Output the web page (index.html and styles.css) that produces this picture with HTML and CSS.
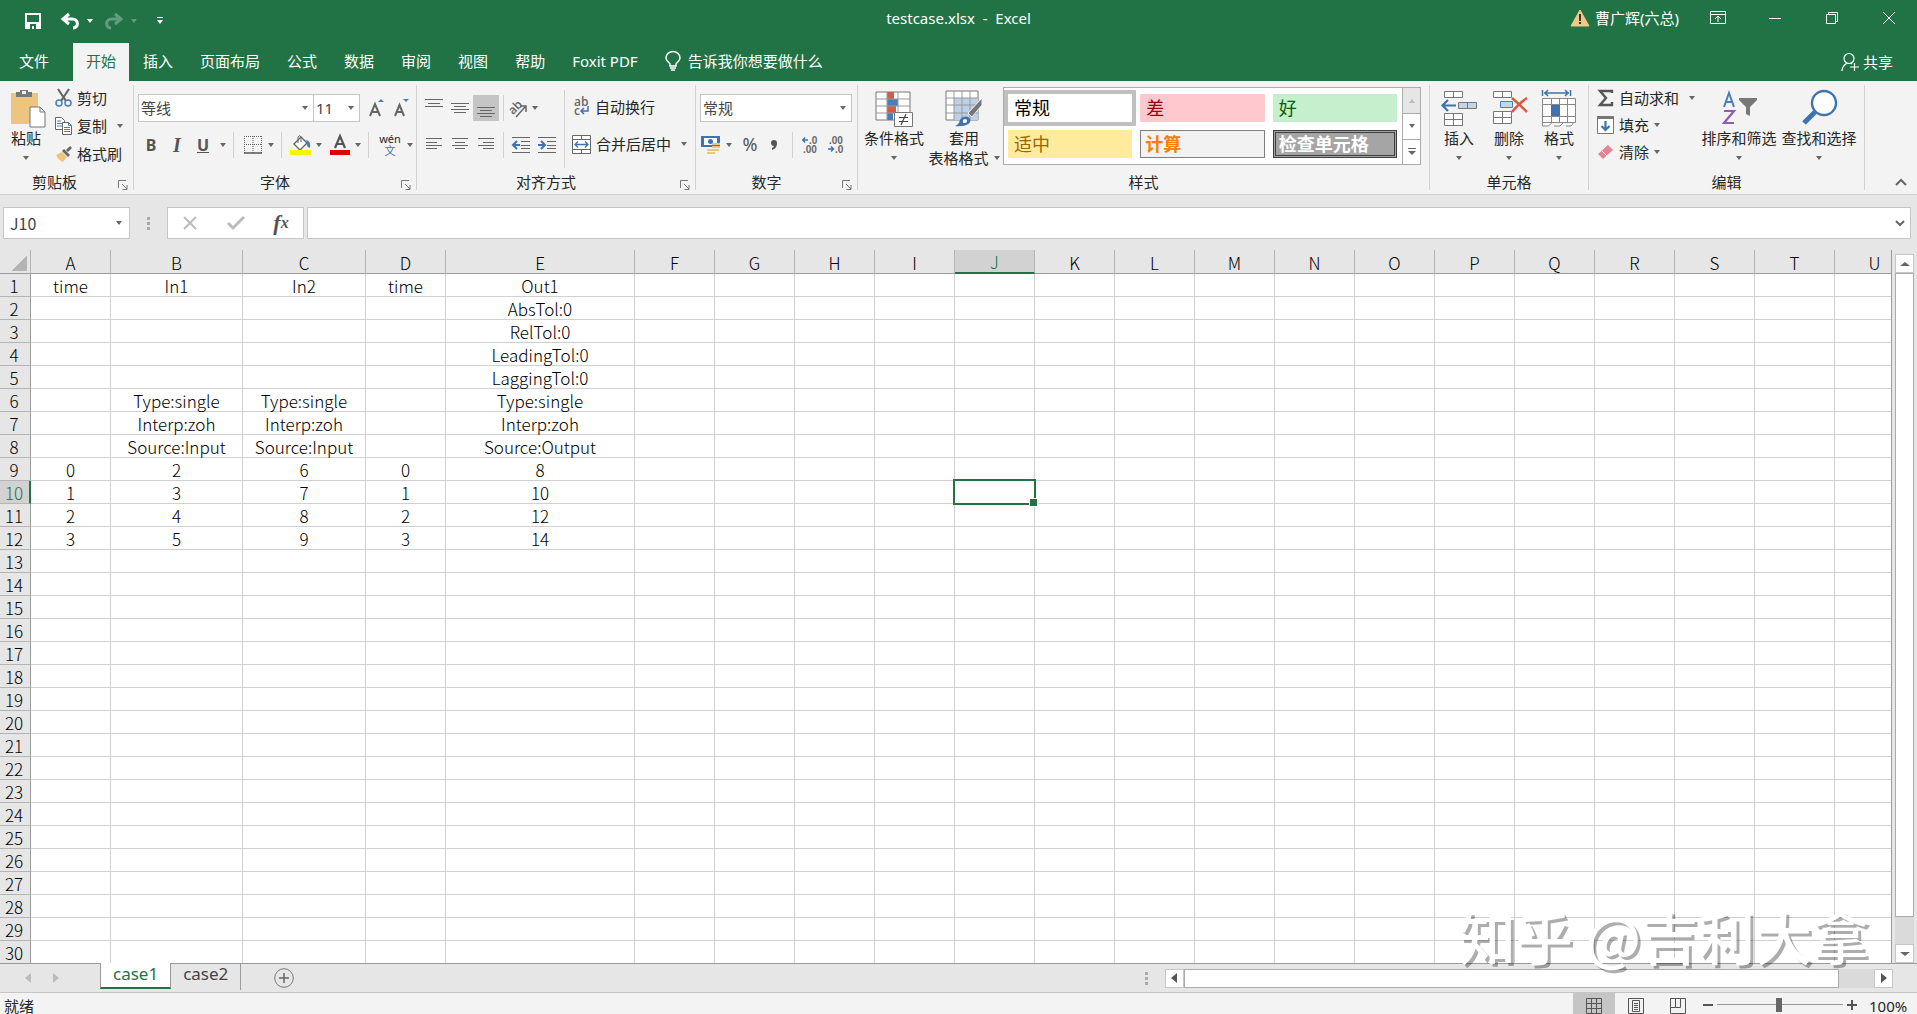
FILE: index.html
```html
<!DOCTYPE html>
<html lang="zh-CN">
  <head>
    <meta charset="UTF-8" />
    <meta name="viewport" content="width=device-width, initial-scale=1.0" />
    <title>testcase.xlsx - Excel</title>
    <link rel="stylesheet" href="styles.css">
  </head>
  <body>
    <!-- title bar -->
    <header class="title-bar">
      <div class="quick-access">
        <button class="qa-save" aria-label="保存">
          <svg width="16" height="16" viewBox="0 0 16 16"><path d="M1 1h14v14H1z" fill="none" stroke="#fff" stroke-width="2" /><path d="M2 9h12v6H2z" fill="#fff" /><path d="M5 11h6v5H9v-3H7v3H5z" fill="#217346" /></svg>
        </button>
        <button class="qa-undo" aria-label="撤消">
          <svg width="18" height="16" viewBox="0 0 18 16"><path d="M8 1L2 6l6 5M3 6h8c7 0 7 9 1 9" fill="none" stroke="#fff" stroke-width="3" /></svg>
          <i class="caret"></i>
        </button>
        <button class="qa-redo" aria-label="恢复">
          <svg width="18" height="16" viewBox="0 0 18 16"><path d="M10 1l6 5-6 5M15 6H7c-7 0-7 9-1 9" fill="none" stroke="#fff" stroke-width="3" /></svg>
          <i class="caret"></i>
        </button>
        <button class="qa-more" aria-label="自定义快速访问工具栏">
          <svg width="6" height="8" viewBox="0 0 6 8"><path d="M0 0h6v1H0zM0 3h6L3 7z" fill="#fff" /></svg>
        </button>
      </div>
      <h1 class="doc-title">testcase.xlsx&nbsp; -&nbsp; Excel</h1>
      <div class="window-tools">
        <button class="account">
          <svg width="20" height="18" viewBox="0 0 20 18"><path d="M10 1l9 16H1z" fill="#f0c987" stroke="#f0c987" stroke-linejoin="round" /><path d="M9 5h2v7H9zM9 13h2v2H9z" fill="#333" /></svg>
          曹广辉(六总)
        </button>
        <button class="win-btn" aria-label="功能区显示选项">
          <svg width="16" height="14" viewBox="0 0 16 14"><path d="M.5.5h15v12H.5zM.5 3.5h15M8 11V5M5 8l3-3 3 3" fill="none" stroke="#fff" /></svg>
        </button>
        <button class="win-btn" aria-label="最小化">
          <svg width="12" height="12" viewBox="0 0 12 12"><path d="M0 6.5h12" stroke="#fff" /></svg>
        </button>
        <button class="win-btn" aria-label="向下还原">
          <svg width="12" height="12" viewBox="0 0 12 12"><path d="M.5 2.5h9v9h-9zM2.5 2V.5h9v9H10" fill="none" stroke="#fff" /></svg>
        </button>
        <button class="win-btn" aria-label="关闭">
          <svg width="12" height="12" viewBox="0 0 12 12"><path d="M0 0l12 12M12 0L0 12" stroke="#fff" /></svg>
        </button>
      </div>
    </header>

    <!-- ribbon tabs -->
    <nav class="tabs">
      <button class="tab tab-file">文件</button>
      <button class="tab active">开始</button>
      <button class="tab">插入</button>
      <button class="tab">页面布局</button>
      <button class="tab">公式</button>
      <button class="tab">数据</button>
      <button class="tab">审阅</button>
      <button class="tab">视图</button>
      <button class="tab">帮助</button>
      <button class="tab">Foxit PDF</button>
      <button class="tab tell-me">
        <svg width="16" height="20" viewBox="0 0 16 20"><path d="M5 15v-2C4 11 1 10 1 7a7 6.5 0 0 1 14 0c0 3-3 4-4 6v2zM5 17h6M6 19h4" fill="none" stroke="#fff" stroke-width="1.5" /></svg>
        告诉我你想要做什么
      </button>
      <button class="share">
        <svg width="18" height="18" viewBox="0 0 18 18"><circle cx="8" cy="5.5" r="5" fill="none" stroke="#fff" stroke-width="1.2" /><path d="M1 18c0-4 2-6 5-8M10 10l1 1M9 14h9M13.5 10v8" fill="none" stroke="#fff" stroke-width="1.2" /></svg>
        共享
      </button>
    </nav>

    <!-- ribbon -->
    <section class="ribbon">
      <div class="group group-clipboard">
        <div class="group-body">
          <button class="big big-paste">
            <svg width="36" height="38" viewBox="0 0 36 38"><path d="M1 4h27v31H1z" fill="#eec57e" /><path d="M6 3h4V1h8v2h4v5H6z" fill="#777" /><path d="M12 2h4v3h-4z" fill="#f3f3f3" /><path d="M20 18h10l5 5v15H20z" fill="#fff" stroke="#777" /><path d="M30 18v5h5" fill="none" stroke="#777" /></svg>
            <span>粘贴</span>
            <i class="caret"></i>
          </button>
          <div class="small-stack">
            <button class="small">
              <svg width="17" height="18" viewBox="0 0 17 18"><path d="M3 0l8 12M14 0L6 12" stroke="#666" stroke-width="2.2" /><circle cx="4" cy="14" r="3" fill="none" stroke="#4a7ebb" stroke-width="1.5" /><circle cx="13" cy="14" r="3" fill="none" stroke="#4a7ebb" stroke-width="1.5" /></svg>
              剪切
            </button>
            <button class="small small-copy">
              <svg width="17" height="18" viewBox="0 0 17 18"><path d="M.5.5h6l3 3v9h-9z" fill="#fff" stroke="#666" /><path d="M2 4h4M2 6.5h5M2 9h5" stroke="#4a7ebb" /><path d="M7.5 5.5h6l3 3v9h-9z" fill="#fff" stroke="#666" /><path d="M13.5 5.5v3h3M9 10.5h6M9 12.5h6M9 14.5h6" fill="none" stroke="#4a7ebb" /></svg>
              复制
              <i class="caret"></i>
            </button>
            <button class="small">
              <svg width="17" height="16" viewBox="0 0 17 16"><path d="M1 9l6-3 5 5-4 5c-3-1-5-3-7-7z" fill="#eec57e" /><path d="M7 5l2-2 6 6-2 2z" fill="#666" /><path d="M11 4l4-4 2 2-4 4z" fill="#666" /></svg>
              格式刷
            </button>
          </div>
        </div>
        <div class="group-label">剪贴板<button class="launcher" aria-label="剪贴板选项"><svg width="10" height="10" viewBox="0 0 10 10"><path d="M.5 8V.5H8M4 4l5 5M9 5v4.5H4.5" fill="none" stroke="#777" /></svg></button></div>
      </div>

      <div class="group group-font">
        <div class="group-body rows">
          <div class="row">
            <label class="combo combo-font"><select aria-label="字体"><option>等线</option></select></label>
            <label class="combo combo-size"><select aria-label="字号"><option>11</option></select></label>
            <button class="tool grow" aria-label="增大字号"><svg width="18" height="20" viewBox="0 0 18 20"><path d="M2 18L7 6l5 12M4 14h6" fill="none" stroke="#666" stroke-width="2" /><path d="M10 4l3-3 3 3z" fill="#4a7ebb" /></svg></button>
            <button class="tool" aria-label="减小字号"><svg width="18" height="20" viewBox="0 0 18 20"><path d="M2 18L6.5 7 11 18M4 14h5" fill="none" stroke="#666" stroke-width="2" /><path d="M10 1h6l-3 3z" fill="#4a7ebb" /></svg></button>
          </div>
          <div class="row">
            <button class="tool letter"><b>B</b></button>
            <button class="tool letter italic"><b>I</b></button>
            <button class="tool letter underline"><b>U</b></button>
            <i class="caret caret-gap"></i>
            <span class="sep"></span>
            <button class="tool icon-tool" aria-label="边框"><svg width="18" height="18" viewBox="0 0 18 18"><path d="M.5 0v17M17.5 0v17M0 .5h18M9 0v17M0 8.5h18" stroke="#666" stroke-dasharray="1 1" /><path d="M0 17h18" stroke="#555" stroke-width="1.5" /></svg></button>
            <i class="caret caret-gap"></i>
            <span class="sep"></span>
            <button class="tool icon-tool" aria-label="填充颜色"><svg width="22" height="20" viewBox="0 0 22 20"><path d="M4 9l7-7 6 6-7 7z" fill="#fff" stroke="#666" stroke-width="1.3" /><path d="M8 8V2q2-3 3 0v5" fill="none" stroke="#666" /><path d="M15 5c4 0 6 3 5 8-2-1-4-2-3-6z" fill="#4a7ebb" /><path d="M0 15h21v5H0z" fill="#fff200" /></svg></button>
            <i class="caret caret-gap"></i>
            <button class="tool icon-tool" aria-label="字体颜色"><svg width="20" height="20" viewBox="0 0 20 20"><path d="M5 13l5-12 5 12M7 9h6" fill="none" stroke="#555" stroke-width="2.2" /><path d="M0 15h20v5H0z" fill="#e00000" /></svg></button>
            <i class="caret caret-gap"></i>
            <span class="sep"></span>
            <button class="tool pinyin"><span>wén</span><span class="wen">文</span></button>
            <i class="caret caret-gap"></i>
          </div>
        </div>
        <div class="group-label">字体<button class="launcher" aria-label="字体设置"><svg width="10" height="10" viewBox="0 0 10 10"><path d="M.5 8V.5H8M4 4l5 5M9 5v4.5H4.5" fill="none" stroke="#777" /></svg></button></div>
      </div>

      <div class="group group-align">
        <div class="group-body">
          <div class="rows">
            <div class="row">
              <button class="tool sq" aria-label="顶端对齐"><svg width="18" height="18" viewBox="0 0 18 18"><path d="M0 .5h18M3 4.5h12M0 7.5h18" stroke="#666" /></svg></button>
              <button class="tool sq" aria-label="垂直居中"><svg width="18" height="18" viewBox="0 0 18 18"><path d="M0 4.5h18M3 7.5h12M0 10.5h18M3 13.5h12" stroke="#666" /></svg></button>
              <button class="tool sq pressed" aria-label="底端对齐"><svg width="18" height="18" viewBox="0 0 18 18"><path d="M0 8.5h18M3 11.5h12M0 14.5h18M3 17.5h12" stroke="#666" /></svg></button>
              <span class="sep"></span>
              <button class="tool" aria-label="方向"><svg width="20" height="20" viewBox="0 0 20 20"><text x="1" y="14" transform="rotate(-45 7 11)" class="icon-text">ab</text><path d="M8 19L17 9M12 8h6v6" fill="none" stroke="#666" stroke-width="1.5" /></svg></button>
              <i class="caret caret-gap"></i>
            </div>
            <div class="row">
              <button class="tool sq" aria-label="左对齐"><svg width="16" height="14" viewBox="0 0 16 14"><path d="M0 .5h16M0 4.5h11M0 7.5h16M0 10.5h11" stroke="#666" /></svg></button>
              <button class="tool sq" aria-label="居中"><svg width="16" height="14" viewBox="0 0 16 14"><path d="M0 .5h16M3 4.5h10M0 7.5h16M3 10.5h10" stroke="#666" /></svg></button>
              <button class="tool sq" aria-label="右对齐"><svg width="16" height="14" viewBox="0 0 16 14"><path d="M0 .5h16M5 4.5h11M0 7.5h16M5 10.5h11" stroke="#666" /></svg></button>
              <span class="sep"></span>
              <button class="tool sq" aria-label="减少缩进"><svg width="18" height="16" viewBox="0 0 18 16"><path d="M0 .5h18M9 4.5h9M9 8.5h9M9 11.5h9M0 15.5h18" stroke="#666" /><path d="M8 8H2M5 4L1 8l4 4" fill="none" stroke="#3f73b0" stroke-width="2" /></svg></button>
              <button class="tool sq" aria-label="增加缩进"><svg width="18" height="16" viewBox="0 0 18 16"><path d="M0 .5h18M9 4.5h9M9 8.5h9M9 11.5h9M0 15.5h18" stroke="#666" /><path d="M0 8h6M3 4l4 4-4 4" fill="none" stroke="#3f73b0" stroke-width="2" /></svg></button>
            </div>
          </div>
          <div class="rows wrap-tools">
            <div class="row">
              <button class="small">
                <svg width="18" height="20" viewBox="0 0 18 20"><text x="2" y="9" class="icon-text">ab</text><text x="2" y="18" class="icon-text">c</text><path d="M16 9v5h-6M12 11l-3 3 3 3" fill="none" stroke="#3f73b0" stroke-width="1.5" /></svg>
                自动换行
              </button>
            </div>
            <div class="row">
              <button class="small small-merge">
                <svg width="19" height="19" viewBox="0 0 19 19"><path d="M.5.5h18v18H.5zM.5 4.5h18M.5 14.5h18M9.5 0v4M9.5 15v4" fill="#fff" stroke="#666" /><path d="M3 9.5h13M6 6.5l-3 3 3 3M13 6.5l3 3-3 3" fill="none" stroke="#3f73b0" stroke-width="1.3" /></svg>
                合并后居中
                <i class="caret"></i>
              </button>
            </div>
          </div>
        </div>
        <div class="group-label">对齐方式<button class="launcher" aria-label="对齐设置"><svg width="10" height="10" viewBox="0 0 10 10"><path d="M.5 8V.5H8M4 4l5 5M9 5v4.5H4.5" fill="none" stroke="#777" /></svg></button></div>
      </div>

      <div class="group group-number">
        <div class="group-body rows">
          <div class="row">
            <label class="combo combo-number"><select aria-label="数字格式"><option>常规</option></select></label>
          </div>
          <div class="row">
            <button class="tool icon-tool" aria-label="会计数字格式"><svg width="20" height="20" viewBox="0 0 20 20"><path d="M0 1h19v11H0z" fill="#3f73b0" /><path d="M3 3h13v7H3z" fill="#fff" /><circle cx="9.5" cy="6.5" r="2.5" fill="#3f73b0" /><path d="M11 8h8v2h-8zM11 11h8v2h-8zM6 14h12v2H6zM6 17h8v2H6z" fill="#eec57e" /></svg></button>
            <i class="caret caret-gap"></i>
            <button class="tool percent">%</button>
            <button class="tool comma" aria-label="千位分隔样式"><svg width="8" height="12" viewBox="0 0 8 12"><path d="M4 1a3 3 0 0 1 3 3c0 4-2 6-5 7V9c1-1 2-1 2-2a3 3 0 0 1 0-6z" fill="#555" /></svg></button>
            <span class="sep"></span>
            <button class="tool decimal" aria-label="增加小数位数"><svg width="17" height="18" viewBox="0 0 17 18"><text x="7" y="8" class="icon-num">.0</text><text x="1" y="17" class="icon-num">.00</text><path d="M6 4H1M3 1.5L.8 4 3 6.5" fill="none" stroke="#3f73b0" stroke-width="1.5" /></svg></button>
            <button class="tool decimal" aria-label="减少小数位数"><svg width="17" height="18" viewBox="0 0 17 18"><text x="1" y="8" class="icon-num">.00</text><text x="7" y="17" class="icon-num">.0</text><path d="M0 13h6M3 10.5L5.5 13 3 15.5" fill="none" stroke="#3f73b0" stroke-width="1.5" /></svg></button>
          </div>
        </div>
        <div class="group-label">数字<button class="launcher" aria-label="数字设置"><svg width="10" height="10" viewBox="0 0 10 10"><path d="M.5 8V.5H8M4 4l5 5M9 5v4.5H4.5" fill="none" stroke="#777" /></svg></button></div>
      </div>

      <div class="group group-styles">
        <div class="group-body">
          <button class="big big-cond">
            <svg width="38" height="38" viewBox="0 0 38 38"><path d="M1 3h34v28H1z" fill="#fff" stroke="#777" /><path d="M12 3h7v7h-7zM12 17h9v7h-9z" fill="#d75b43" /><path d="M12 10h11v7H12zM12 24h6v7h-6z" fill="#4a7ebb" /><path d="M1 10h34M1 17h34M1 24h34M12 3v28M23 3v28" fill="none" stroke="#999" /><path d="M19.5 23.5h18v14h-18z" fill="#fff" stroke="#777" /><path d="M24 28.5h9M24 32.5h9M31 25l-5 11" stroke="#444" stroke-width="1.2" /></svg>
            <span>条件格式</span>
            <i class="caret"></i>
          </button>
          <button class="big big-table">
            <svg width="38" height="38" viewBox="0 0 38 38"><path d="M1 2h32v29H1z" fill="#fff" stroke="#777" /><path d="M9 9h24v22H9z" fill="#bdd0e9" /><path d="M1 9h32M1 16h32M1 24h32M9 2v29M17 2v29M25 2v29" stroke="#999" /><path d="M23 24L37 9v7L27 28z" fill="#777" stroke="#f3f3f3" /><path d="M10 37c3-1 4-3 5-6 2-4 8-5 10-1 2 5-5 8-15 7z" fill="#3f73b0" /><path d="M18 31c2-2 4-1 4 1s-2 2-4 2z" fill="#fff" /></svg>
            <span>套用</span>
            <span class="with-caret">表格格式<i class="caret"></i></span>
          </button>
          <div class="gallery">
            <div class="gallery-items">
              <button class="style-item selected">常规</button>
              <button class="style-item bad">差</button>
              <button class="style-item good">好</button>
              <button class="style-item neutral">适中</button>
              <button class="style-item calc">计算</button>
              <button class="style-item check">检查单元格</button>
            </div>
            <div class="gallery-scroll">
              <button class="off" aria-label="上一行"><i class="caret up"></i></button>
              <button aria-label="下一行"><i class="caret"></i></button>
              <button aria-label="其他"><svg width="8" height="8" viewBox="0 0 8 8"><path d="M0 0h8v1H0zM0 3h8L4 7z" fill="#666" /></svg></button>
            </div>
          </div>
        </div>
        <div class="group-label">样式</div>
      </div>

      <div class="group group-cells">
        <div class="group-body">
          <button class="big big-cell">
            <svg width="38" height="38" viewBox="0 0 38 38"><path d="M4.5 2.5h18v6h-18zM13.5 2.5v6M4.5 24.5h18v12h-18zM4.5 30.5h18M13.5 24.5v12" fill="#fff" stroke="#777" /><path d="M18.5 13.5h18v6h-18zM27.5 13.5v6" fill="#c3d5ea" stroke="#777" /><path d="M16 16.5H3M8 11l-5.5 5.5L8 22" fill="none" stroke="#3f73b0" stroke-width="2.2" /></svg>
            <span>插入</span>
            <i class="caret"></i>
          </button>
          <button class="big big-cell">
            <svg width="38" height="38" viewBox="0 0 38 38"><path d="M3.5 2.5h18v6h-18zM12.5 2.5v6M3.5 22.5h18v12h-18zM3.5 28.5h18M12.5 22.5v12" fill="#fff" stroke="#777" /><path d="M10.5 12.5h12v6h-12z" fill="#c3d5ea" stroke="#4a7ebb" /><path d="M22 9q7 6 15 14M37 9q-8 5-15 14" fill="none" stroke="#d75b43" stroke-width="2.5" /></svg>
            <span>删除</span>
            <i class="caret"></i>
          </button>
          <button class="big big-cell">
            <svg width="38" height="38" viewBox="0 0 38 38"><path d="M2.5 1v6M30.5 1v6M4 4h25M8 1L5 4l3 3M25 1l3 3-3 3" fill="none" stroke="#3f73b0" stroke-width="1.5" /><path d="M2.5 9.5h33v24h-33zM2.5 15.5h33M2.5 27.5h33M11.5 9v24M19.5 9v24M27.5 9v24M2.5 33v4h6l4-4M14 37h6l4-4M26 37h5l3-4" fill="#fff" stroke="#888" /><path d="M11 16h9v11h-9z" fill="#3f73b0" /></svg>
            <span>格式</span>
            <i class="caret"></i>
          </button>
        </div>
        <div class="group-label">单元格</div>
      </div>

      <div class="group group-edit">
        <div class="group-body">
          <div class="small-stack edit-stack">
            <button class="small small-sum">
              <svg width="17" height="18" viewBox="0 0 17 18"><path d="M15 4V2H3l6 7-6 7h12v-3" fill="none" stroke="#555" stroke-width="2.4" /></svg>
              自动求和
              <i class="caret"></i>
            </button>
            <button class="small">
              <svg width="17" height="18" viewBox="0 0 17 18"><path d="M.5.5h16v17H.5z" fill="#fff" stroke="#777" /><path d="M0 0h17v3H0z" fill="#777" /><path d="M8.5 5v9M4.5 10l4 4 4-4" fill="none" stroke="#3f73b0" stroke-width="2.2" /></svg>
              填充
              <i class="caret"></i>
            </button>
            <button class="small">
              <svg width="17" height="18" viewBox="0 0 17 18"><path d="M1 11L11 2l5 5L6 16z" fill="#e28494" /><path d="M5 8l5 5" stroke="#f3f3f3" /></svg>
              清除
              <i class="caret"></i>
            </button>
          </div>
          <button class="big big-edit">
            <svg width="38" height="38" viewBox="0 0 38 38"><path d="M4 18L9 4l5 14M6 13h7" fill="none" stroke="#4a7ebb" stroke-width="2" /><path d="M4 22h10L4 34h10" fill="none" stroke="#8e5db0" stroke-width="2.2" /><path d="M19 9h18v2l-7 7v9l-4-2v-7l-7-7z" fill="#777" /></svg>
            <span>排序和筛选</span>
            <i class="caret"></i>
          </button>
          <button class="big big-edit">
            <svg width="38" height="38" viewBox="0 0 38 38"><path d="M15 23L4 34" stroke="#3f73b0" stroke-width="5" /><circle cx="24" cy="14" r="12" fill="#fff" stroke="#3f73b0" stroke-width="2.4" /></svg>
            <span>查找和选择</span>
            <i class="caret"></i>
          </button>
        </div>
        <div class="group-label">编辑</div>
      </div>
      <button class="collapse" aria-label="折叠功能区"><svg width="12" height="8" viewBox="0 0 12 8"><path d="M1 7l5-5 5 5" fill="none" stroke="#666" stroke-width="2" /></svg></button>
    </section>

    <!-- formula bar -->
    <section class="formula-bar">
      <div class="name-box">
        <input type="text" value="J10" aria-label="名称框">
        <button aria-label="名称列表"><i class="caret"></i></button>
      </div>
      <span class="dots"></span>
      <div class="fx-box">
        <button aria-label="取消"><svg width="16" height="14" viewBox="0 0 16 14"><path d="M2 1l12 12M14 1L2 13" stroke="#bbb" stroke-width="2" /></svg></button>
        <button aria-label="输入"><svg width="18" height="14" viewBox="0 0 18 14"><path d="M1 7l5 5L17 1" fill="none" stroke="#bbb" stroke-width="3" /></svg></button>
        <button class="fx" aria-label="插入函数">f<small>x</small></button>
      </div>
      <div class="formula-input">
        <input type="text" aria-label="编辑栏">
        <button aria-label="展开编辑栏"><svg width="10" height="8" viewBox="0 0 10 8"><path d="M1 2l4 4 4-4" fill="none" stroke="#666" stroke-width="2" /></svg></button>
      </div>
    </section>

    <!-- sheet -->
    <main class="sheet">
      <div class="grid">
        <table>
          <colgroup id="cols"></colgroup>
          <thead><tr id="head"></tr></thead>
          <tbody id="rows"></tbody>
        </table>
      </div>
      <div class="v-scroll">
        <button aria-label="向上滚动"><i class="caret up"></i></button>
        <div class="v-track"><div class="v-thumb"></div></div>
        <button aria-label="向下滚动"><i class="caret"></i></button>
      </div>
      <div class="watermark">知乎 @吉利大拿</div>
    </main>

    <!-- sheet tabs -->
    <section class="sheet-bar">
      <div class="sheet-nav">
        <button aria-label="上一张"><svg width="6" height="10" viewBox="0 0 6 10"><path d="M6 0v10L0 5z" fill="#bbb" /></svg></button>
        <button aria-label="下一张"><svg width="6" height="10" viewBox="0 0 6 10"><path d="M0 0v10l6-5z" fill="#bbb" /></svg></button>
      </div>
      <button class="sheet-tab current">case1</button>
      <button class="sheet-tab">case2</button>
      <button class="add-sheet" aria-label="新工作表"><svg width="20" height="20" viewBox="0 0 20 20"><circle cx="10" cy="10" r="9.3" fill="none" stroke="#777" /><path d="M10 5v10M5 10h10" stroke="#666" stroke-width="1.5" /></svg></button>
      <span class="dots"></span>
      <div class="h-scroll">
        <button aria-label="向左滚动"><svg width="6" height="10" viewBox="0 0 6 10"><path d="M6 0v10L0 5z" fill="#555" /></svg></button>
        <div class="h-track"><div class="h-thumb"></div></div>
        <button aria-label="向右滚动"><svg width="6" height="10" viewBox="0 0 6 10"><path d="M0 0v10l6-5z" fill="#555" /></svg></button>
      </div>
    </section>

    <!-- status bar -->
    <footer class="status-bar">
      <span class="ready">就绪</span>
      <button class="view on" aria-label="普通"><svg width="16" height="16" viewBox="0 0 16 16"><path d="M.5.5h15v15H.5zM.5 5.5h15M.5 10.5h15M5.5 0v16M10.5 0v16" fill="none" stroke="#555" /></svg></button>
      <button class="view" aria-label="页面布局"><svg width="16" height="16" viewBox="0 0 16 16"><path d="M.5.5h15v15H.5zM4.5 2.5h7v11h-7zM6 5.5h4M6 7.5h4M6 9.5h4M6 11.5h4" fill="none" stroke="#555" /></svg></button>
      <button class="view" aria-label="分页预览"><svg width="16" height="16" viewBox="0 0 16 16"><path d="M.5.5h15v15H.5zM.5 9.5h10V.5M5.5 0v9" fill="none" stroke="#555" /></svg></button>
      <button class="zoom-btn" aria-label="缩小"><svg width="10" height="10" viewBox="0 0 10 10"><path d="M0 5h10" stroke="#555" stroke-width="2" /></svg></button>
      <input class="zoom" type="range" min="0" max="100" value="49" aria-label="缩放">
      <button class="zoom-btn" aria-label="放大"><svg width="10" height="10" viewBox="0 0 10 10"><path d="M0 5h10M5 0v10" stroke="#555" stroke-width="2" /></svg></button>
      <button class="zoom-value">100%</button>
    </footer>

    <script>
      // column name -> width in px
      const columns = { A: 80, B: 132, C: 123, D: 80, E: 189 };
      for (const name of 'FGHIJKLMNOPQRSTU') columns[name] = 80;
      const rowCount = 30;
      const active = { col: 'J', row: 10 };

      const data = {
        1: { A: 'time', B: 'In1', C: 'In2', D: 'time', E: 'Out1' },
        2: { E: 'AbsTol:0' },
        3: { E: 'RelTol:0' },
        4: { E: 'LeadingTol:0' },
        5: { E: 'LaggingTol:0' },
        6: { B: 'Type:single', C: 'Type:single', E: 'Type:single' },
        7: { B: 'Interp:zoh', C: 'Interp:zoh', E: 'Interp:zoh' },
        8: { B: 'Source:Input', C: 'Source:Input', E: 'Source:Output' },
        9: { A: 0, B: 2, C: 6, D: 0, E: 8 },
        10: { A: 1, B: 3, C: 7, D: 1, E: 10 },
        11: { A: 2, B: 4, C: 8, D: 2, E: 12 },
        12: { A: 3, B: 5, C: 9, D: 3, E: 14 },
      };

      const cols = document.getElementById('cols');
      const head = document.getElementById('head');
      const rows = document.getElementById('rows');

      function add(parent, tag, text, className) {
        const el = document.createElement(tag);
        if (text !== undefined) el.textContent = text;
        if (className) el.className = className;
        parent.appendChild(el);
        return el;
      }

      add(cols, 'col', undefined, 'col-index');
      add(head, 'th', '', 'corner');
      for (const name in columns) {
        add(cols, 'col').style.width = columns[name] + 'px';
        add(head, 'th', name, name === active.col ? 'active' : '');
      }

      for (let r = 1; r <= rowCount; r++) {
        const tr = add(rows, 'tr');
        add(tr, 'th', r, r === active.row ? 'active' : '');
        for (const name in columns) {
          const value = data[r] ? data[r][name] : undefined;
          const isActive = r === active.row && name === active.col;
          add(tr, 'td', value, isActive ? 'active' : '');
        }
      }
    </script>
  </body>
</html>
```

FILE: styles.css
```css
* {
  margin: 0;
  padding: 0;
  box-sizing: border-box;
}

body {
  height: 100vh;
  display: flex;
  flex-direction: column;
  overflow: hidden;
  background: #e6e6e6;
  color: #262626;
  font-family: 'Noto Sans', 'Noto Sans CJK SC', sans-serif;
  font-size: 15px;
  line-height: 20px;
}

button,
input,
select {
  font: inherit;
  color: inherit;
  background: none;
  border: none;
  outline: none;
}

button {
  display: flex;
  align-items: center;
  white-space: nowrap;
}

svg {
  display: block;
  flex: none;
  overflow: visible;
}

.caret {
  width: 0;
  height: 0;
  flex: none;
  border: 3px solid transparent;
  border-top: 4px solid #666;
  border-bottom: none;
}

.caret.up {
  border-top: none;
  border-bottom: 4px solid #666;
}

/* title bar */
.title-bar {
  display: grid;
  grid-template-columns: 1fr auto 1fr;
  align-items: center;
  height: 43px;
  padding-bottom: 8px;
  background: #217346;
  color: #fff;
}

.quick-access {
  display: flex;
  align-items: center;
  padding: 7px 0 0 25px;
  gap: 20px;
}

.quick-access button {
  gap: 8px;
}

.quick-access .caret {
  border-top-color: #fff;
}

.qa-redo {
  opacity: 0.3;
  margin-left: -8px;
}

.doc-title {
  font-size: 15px;
  font-weight: 400;
}

.window-tools {
  display: flex;
  justify-content: flex-end;
}

.account {
  gap: 5px;
  margin-right: 10px;
}

.win-btn {
  width: 57px;
  height: 35px;
  justify-content: center;
}

/* tabs */
.tabs {
  display: flex;
  gap: 1px;
  height: 38px;
  background: #217346;
  color: #fff;
}

.tab {
  padding: 0 13px 2px;
}

.tab-file {
  padding: 0 23px 2px 19px;
}

.tab.active {
  background: #f3f3f3;
  color: #217346;
}

.tell-me {
  gap: 7px;
}

.share {
  margin-left: auto;
  padding-right: 24px;
  gap: 4px;
}

/* ribbon */
.ribbon {
  display: flex;
  height: 114px;
  padding: 4px 0;
  background: #f3f3f3;
  border-bottom: 1px solid #d0d0d0;
}

.group {
  display: flex;
  flex-direction: column;
  border-right: 1px solid #d2d2d2;
}

.group-body {
  display: flex;
  flex: 1;
}

.group-label {
  position: relative;
  height: 18px;
  text-align: center;
}

.launcher {
  position: absolute;
  right: 5px;
  bottom: 0;
}

.group-clipboard .group-label {
  padding-right: 24px;
}

.group-clipboard {
  width: 134px;
}

.group-font {
  width: 283px;
}

.group-align {
  width: 279px;
}

.group-align .group-label {
  padding-right: 20px;
}

.group-number {
  width: 162px;
}

.group-number .group-label {
  padding-right: 20px;
}

.group-styles {
  flex: 1;
}

.group-cells {
  width: 159px;
}

.group-edit {
  width: 276px;
}

.big {
  flex-direction: column;
  align-items: center;
  padding-top: 4px;
}

.big svg {
  margin-bottom: 1px;
}

.big > .caret {
  margin-top: 8px;
}

.big-paste {
  width: 52px;
}

.big-paste svg {
  margin-left: 4px;
}

.big-cond {
  width: 72px;
}

.big-table {
  width: 68px;
}

.big-cell {
  width: 50px;
}

.big-edit {
  width: 80px;
}

.with-caret {
  display: flex;
  align-items: center;
  gap: 5px;
}

.small-stack {
  display: flex;
  flex-direction: column;
}

.small {
  height: 28px;
  padding-bottom: 2px;
  gap: 5px;
}

.group-clipboard .small {
  padding-left: 3px;
}

.small-copy .caret {
  margin-left: 5px;
}

.rows {
  display: flex;
  flex-direction: column;
  padding: 5px 0 0 4px;
}

.row {
  display: flex;
  align-items: center;
  height: 37px;
  padding-bottom: 1px;
}

.combo {
  display: flex;
  align-items: center;
  height: 28px;
  background: #fff;
  border: 1px solid #c6c6c6;
  color: #444;
}

.combo::after {
  content: '';
  margin-left: -11px;
  margin-right: 5px;
  border: 3px solid transparent;
  border-top: 4px solid #666;
  border-bottom: none;
  pointer-events: none;
}

.combo select {
  width: 100%;
  appearance: none;
  padding-left: 2px;
}

.combo-font {
  width: 176px;
}

.combo-size {
  width: 47px;
  margin-left: -1px;
}

.combo-number {
  width: 152px;
}

.tool {
  flex: none;
  height: 26px;
  justify-content: center;
}

.group-font .row:first-child .tool {
  width: 25px;
}

.grow {
  margin-left: 4px;
}

.icon-tool {
  width: 22px;
}

.letter {
  width: 26px;
  color: #555;
  font-size: 16px;
}

.italic {
  font-family: 'Liberation Serif', serif;
  font-size: 20px;
  font-style: italic;
}

.underline {
  text-decoration: underline;
}

.caret-gap {
  margin: 0 7px 0 4px;
}

.sep {
  flex: none;
  width: 1px;
  height: 26px;
  margin-right: 8px;
  background: #d2d2d2;
}

.pinyin {
  width: 26px;
  flex-direction: column;
  font-size: 11px;
  line-height: 12px;
}

.wen {
  color: #3f73b0;
}

.sq {
  width: 26px;
}

.pressed {
  background: #c5c5c5;
}

.group-align .sep {
  margin: 0 4px;
}

.icon-text {
  font-family: 'Open Sans', sans-serif;
  font-size: 12px;
  font-weight: 600;
  fill: #666;
}

.icon-num {
  font-family: 'Liberation Sans', sans-serif;
  font-size: 10px;
  font-weight: 700;
  fill: #666;
}

.wrap-tools {
  margin: 5px 0 4px 4px;
  padding: 0 0 0 7px;
  border-left: 1px solid #d2d2d2;
}

.small-merge .caret {
  margin-left: 5px;
}

.percent {
  width: 22px;
  padding-bottom: 2px;
  color: #555;
  font-size: 18px;
}

.comma {
  width: 26px;
}

.group-number .sep {
  margin: 0 4px 0 5px;
}

.decimal {
  width: 26px;
}

/* style gallery */
.gallery {
  display: flex;
  flex: 1;
  height: 78px;
  margin: 2px 8px 0 5px;
  background: #fff;
  border: 1px solid #ababab;
}

.gallery-items {
  display: grid;
  grid-template-columns: repeat(3, 1fr);
  grid-auto-rows: 28px;
  gap: 8px;
  flex: 1;
  padding: 6px 5px 6px 4px;
}

.style-item {
  padding-left: 6px;
  font-size: 18px;
  color: #000;
}

.selected {
  outline: 4px solid #c0c0c0;
}

.bad {
  background: #ffc7ce;
  color: #9c0006;
}

.good {
  background: #c6efce;
  color: #006100;
}

.neutral {
  background: #ffeb9c;
  color: #9c6500;
}

.calc {
  background: #f2f2f2;
  border: 1px solid #7f7f7f;
  color: #fa7d00;
  font-weight: 700;
  padding-left: 4px;
}

.check {
  background: #a5a5a5;
  border: 3px double #3f3f3f;
  color: #fff;
  font-weight: 700;
  padding-left: 3px;
}

.gallery-scroll {
  display: grid;
  grid-template-rows: repeat(3, 1fr);
  width: 18px;
  border-left: 1px solid #ababab;
}

.gallery-scroll button {
  justify-content: center;
}

.gallery-scroll button + button {
  border-top: 1px solid #ababab;
}

.gallery-scroll .off {
  background: #e6e6e6;
}

.off .caret {
  border-bottom-color: #bbb;
}

.group-cells .group-body {
  padding-left: 4px;
}

.edit-stack {
  width: 110px;
  padding-left: 8px;
}

.edit-stack .small {
  height: 27px;
}

.small-sum .caret {
  margin-left: 5px;
}

.collapse {
  width: 52px;
  padding: 0 0 4px 30px;
  align-items: flex-end;
}

/* formula bar */
.formula-bar {
  display: flex;
  height: 55px;
  padding: 12px 6px 11px 3px;
}

.name-box,
.fx-box,
.formula-input {
  display: flex;
  background: #fff;
  border: 1px solid #c6c6c6;
}

.name-box {
  width: 127px;
  color: #444;
  font-family: 'Noto Sans CJK SC', sans-serif;
  font-size: 16px;
}

.name-box input {
  flex: 1;
  min-width: 0;
  padding-left: 6px;
}

.name-box button {
  width: 20px;
  justify-content: center;
}

.dots {
  align-self: center;
  width: 3px;
  height: 13px;
  background: repeating-linear-gradient(#aaa 0 3px, transparent 3px 5px);
}

.formula-bar .dots {
  margin: 0 17px;
}

.fx-box {
  width: 137px;
  justify-content: space-around;
  margin-right: 3px;
}

.fx {
  color: #555;
  font-family: 'Liberation Serif', serif;
  font-size: 22px;
  font-style: italic;
  font-weight: 700;
}

.fx small {
  font-size: 16px;
}

.formula-input {
  flex: 1;
}

.formula-input input {
  flex: 1;
  padding: 0 6px;
}

.formula-input button {
  padding-right: 5px;
}

/* sheet */
.sheet {
  position: relative;
  display: flex;
  flex: 1;
  min-height: 0;
}

.grid {
  flex: 1;
  min-width: 0;
  overflow: hidden;
  border-right: 1px solid #9b9b9b;
}

table {
  width: 100%;
  table-layout: fixed;
  border-collapse: separate;
  border-spacing: 0;
  font-family: 'Noto Sans CJK SC', sans-serif;
  font-size: 17px;
  font-weight: 300;
  line-height: 20px;
  color: #000;
  background: #fff;
}

.col-index {
  width: 31px;
}

th {
  padding-top: 2px;
  font-weight: 300;
  background: #e6e6e6;
  border-right: 1px solid #9b9b9b;
  border-bottom: 1px solid #b4b4b4;
}

thead th {
  height: 24px;
  border-right-color: #b4b4b4;
  border-bottom-color: #9b9b9b;
}

tbody th,
td {
  height: 23px;
}

tbody th {
  padding-right: 2px;
}

td {
  padding-top: 2px;
  text-align: center;
  border-right: 1px solid #d0d0d0;
  border-bottom: 1px solid #d0d0d0;
}

th.active {
  background: #d2d2d2;
  color: #217346;
}

thead th.active {
  border-bottom: 2px solid #217346;
}

tbody th.active {
  padding-right: 1px;
  border-right: 2px solid #217346;
}

.corner {
  background: linear-gradient(135deg, transparent 50%, #b4b4b4 50%) 12px 6px / 15px 15px no-repeat #e6e6e6;
}

td.active {
  position: relative;
}

/* selection frame and its fill handle */
td.active::before {
  content: '';
  position: absolute;
  inset: -2px;
  border: 2px solid #217346;
}

td.active::after {
  content: '';
  position: absolute;
  right: -4px;
  bottom: -4px;
  width: 7px;
  height: 7px;
  background: #217346;
  border: 1px solid #fff;
}

.v-scroll {
  display: flex;
  flex-direction: column;
  width: 25px;
  padding: 4px 3px 0;
}

.v-scroll button,
.h-scroll button {
  width: 19px;
  height: 19px;
  flex: none;
  justify-content: center;
  background: #fff;
  border: 1px solid #c6c6c6;
}

.v-scroll .caret {
  border-left-width: 5px;
  border-right-width: 5px;
}

.v-track {
  flex: 1;
  background: #dadada;
}

.v-thumb {
  height: 96%;
  background: #fff;
  border: 1px solid #ababab;
}

.watermark {
  position: absolute;
  right: 48px;
  bottom: -4px;
  font-family: 'Noto Sans CJK SC', sans-serif;
  font-size: 57px;
  font-weight: 500;
  line-height: 64px;
  color: #fff;
  text-shadow: 3px 3px 0 rgba(0, 0, 0, 0.32);
  pointer-events: none;
}

/* sheet tabs */
.sheet-bar {
  display: flex;
  height: 29px;
  border-top: 1px solid #9b9b9b;
}

.sheet-nav {
  display: flex;
  gap: 22px;
  width: 100px;
  padding-left: 25px;
}

.sheet-tab {
  align-self: flex-start;
  height: 26px;
  padding: 0 12px 6px;
  border-right: 1px solid #9b9b9b;
  font-size: 17px;
  color: #444;
}

.sheet-tab.current {
  margin-top: -1px;
  padding-bottom: 2px;
  background: #fff;
  border-left: 1px solid #9b9b9b;
  border-bottom: 2px solid #217346;
  color: #217346;
}

.add-sheet {
  margin-left: 33px;
}

.sheet-bar .dots {
  margin-left: auto;
}

.h-scroll {
  display: flex;
  align-items: center;
  width: 38%;
  margin: 0 24px 0 17px;
}

.h-track {
  flex: 1;
  height: 19px;
  background: #dadada;
}

.h-thumb {
  width: 95%;
  height: 19px;
  background: #fff;
  border: 1px solid #ababab;
}

/* status bar */
.status-bar {
  display: flex;
  height: 22px;
  padding-top: 2px;
  background: #f3f3f3;
  border-top: 1px solid #c6c6c6;
}

.ready {
  margin-right: auto;
  padding: 1px 0 0 4px;
}

.view {
  width: 42px;
  margin-top: -2px;
  padding-top: 4px;
  justify-content: center;
}

.view.on {
  background: #c5c5c5;
}

.zoom-btn {
  margin-left: 4px;
}

.zoom-btn + .zoom-value {
  min-width: 40px;
  margin: 2px 8px 0 12px;
}

.zoom {
  width: 126px;
  margin-left: 4px;
  appearance: none;
}

.zoom::-webkit-slider-runnable-track {
  height: 14px;
  background: linear-gradient(#999, #999) 0 50% / 100% 1px no-repeat;
}

.zoom::-webkit-slider-thumb {
  appearance: none;
  width: 6px;
  height: 14px;
  background: #666;
}
```
